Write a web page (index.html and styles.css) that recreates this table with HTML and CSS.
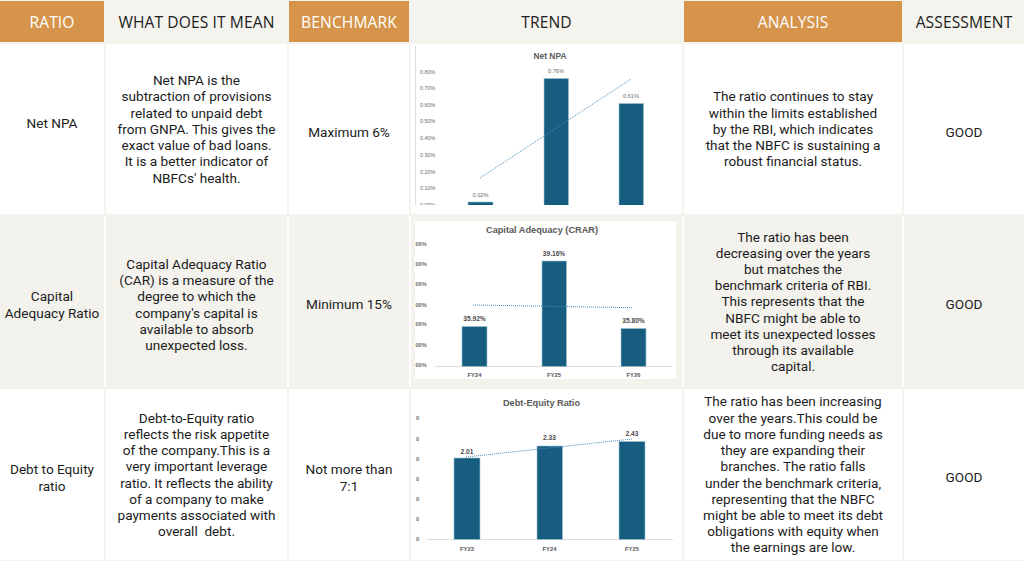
FILE: index.html
```html
<!DOCTYPE html>
<html lang="en">
<head>
<meta charset="utf-8">
<title>NBFC Ratio Analysis</title>
<link rel="stylesheet" href="styles.css">
</head>
<body>
<div class="table">
  <div class="row head">
    <div class="cell hc orange">RATIO</div>
    <div class="cell hc plain">WHAT DOES IT MEAN</div>
    <div class="cell hc orange">BENCHMARK</div>
    <div class="cell hc plain">TREND</div>
    <div class="cell hc orange">ANALYSIS</div>
    <div class="cell hc plain">ASSESSMENT</div>
  </div>

  <div class="row r1">
    <div class="cell"><p class="lift">Net NPA</p></div>
    <div class="cell"><p>Net NPA is the<br>subtraction of provisions<br>related to unpaid debt<br>from GNPA. This gives the<br>exact value of bad loans.<br>It is a better indicator of<br>NBFCs' health.</p></div>
    <div class="cell"><p class="drop">Maximum 6%</p></div>
    <div class="cell chart">
      <svg class="chart-svg" viewBox="411 43 271 170" width="271" height="170">
        <defs><clipPath id="c1"><rect x="411" y="43" width="271" height="161"/></clipPath></defs>
        <g clip-path="url(#c1)">
          <line x1="415.5" y1="45" x2="415.5" y2="204" class="axis"/>
          <text x="550" y="58" class="title t1">Net NPA</text>
          <g class="ylab">
            <text x="420" y="72.5">0.80%</text>
            <text x="420" y="89">0.70%</text>
            <text x="420" y="105.5">0.60%</text>
            <text x="420" y="122">0.50%</text>
            <text x="420" y="139">0.40%</text>
            <text x="420" y="156">0.30%</text>
            <text x="420" y="172.5">0.20%</text>
            <text x="420" y="189">0.10%</text>
            <text x="420" y="206">0.00%</text>
          </g>
          <rect x="468" y="201" width="25" height="4" class="bar"/>
          <rect x="544" y="77.5" width="24.5" height="127" class="bar"/>
          <rect x="619" y="102.5" width="24.5" height="102" class="bar"/>
          <g class="dlab">
            <text x="480.5" y="196">0.02%</text>
            <text x="556" y="72">0.76%</text>
            <text x="631" y="97">0.61%</text>
          </g>
          <line x1="480" y1="177" x2="631" y2="78" class="trend"/>
        </g>
      </svg>
    </div>
    <div class="cell"><p>The ratio continues to stay<br>within the limits established<br>by the RBI, which indicates<br>that the NBFC is sustaining a<br>robust financial status.</p></div>
    <div class="cell"><p class="drop">GOOD</p></div>
  </div>

  <div class="row r2">
    <div class="cell"><p class="drop">Capital<br>Adequacy Ratio</p></div>
    <div class="cell"><p class="drop">Capital Adequacy Ratio<br>(CAR) is a measure of the<br>degree to which the<br>company's capital is<br>available to absorb<br>unexpected loss.</p></div>
    <div class="cell"><p class="drop">Minimum 15%</p></div>
    <div class="cell chart">
      <svg class="chart-svg" viewBox="411 215 271 171" width="271" height="171">
        <rect x="415" y="220" width="261" height="158" fill="#ffffff"/>
        <text x="542" y="231.5" class="title">Capital Adequacy (CRAR)</text>
        <g class="ylab b">
          <text x="415.5" y="245">00%</text>
          <text x="415.5" y="265">00%</text>
          <text x="415.5" y="285">00%</text>
          <text x="415.5" y="306">00%</text>
          <text x="415.5" y="325">00%</text>
          <text x="415.5" y="346">00%</text>
          <text x="415.5" y="366">00%</text>
        </g>
        <line x1="435" y1="365.5" x2="673" y2="365.5" class="axis"/>
        <rect x="462" y="325.5" width="25" height="40" class="bar"/>
        <rect x="542" y="260" width="24.5" height="105.5" class="bar"/>
        <rect x="621" y="327.5" width="25" height="38" class="bar"/>
        <g class="dlab b">
          <text x="474.5" y="320">35.92%</text>
          <text x="554" y="255">39.16%</text>
          <text x="633.5" y="322">35.80%</text>
        </g>
        <g class="xlab">
          <text x="474.5" y="376">FY24</text>
          <text x="554" y="376">FY25</text>
          <text x="633.5" y="376">FY26</text>
        </g>
        <line x1="473" y1="304" x2="633" y2="306.7" class="trend"/>
      </svg>
    </div>
    <div class="cell"><p>The ratio has been<br>decreasing over the years<br>but matches the<br>benchmark criteria of RBI.<br>This represents that the<br>NBFC might be able to<br>meet its unexpected losses<br>through its available<br>capital.</p></div>
    <div class="cell"><p class="drop">GOOD</p></div>
  </div>

  <div class="row r3">
    <div class="cell"><p class="drop">Debt to Equity<br>ratio</p></div>
    <div class="cell"><p>Debt-to-Equity ratio<br>reflects the risk appetite<br>of the company.This is a<br>very important leverage<br>ratio. It reflects the ability<br>of a company to make<br>payments associated with<br>overall&nbsp; debt.</p></div>
    <div class="cell"><p class="drop">Not more than<br>7:1</p></div>
    <div class="cell chart">
      <svg class="chart-svg" viewBox="411 388 271 171" width="271" height="171">
        <text x="541.5" y="404.5" class="title">Debt-Equity Ratio</text>
        <g class="ylab b">
          <text x="416" y="419">0</text>
          <text x="416" y="439.7">0</text>
          <text x="416" y="459.7">0</text>
          <text x="416" y="480">0</text>
          <text x="416" y="499.7">0</text>
          <text x="416" y="520">0</text>
          <text x="416" y="540">0</text>
        </g>
        <line x1="427" y1="538.5" x2="673" y2="538.5" class="axis"/>
        <rect x="454" y="457" width="26" height="81.5" class="bar"/>
        <rect x="537" y="445" width="25.5" height="93.5" class="bar"/>
        <rect x="619" y="440.5" width="26" height="98" class="bar"/>
        <g class="dlab b">
          <text x="467" y="453">2.01</text>
          <text x="549.5" y="439">2.33</text>
          <text x="632" y="435">2.43</text>
        </g>
        <g class="xlab">
          <text x="467" y="550">FY23</text>
          <text x="549.5" y="550">FY24</text>
          <text x="632" y="550">FY25</text>
        </g>
        <line x1="466" y1="456" x2="632" y2="438" class="trend"/>
      </svg>
    </div>
    <div class="cell"><p>The ratio has been increasing<br>over the years.This could be<br>due to more funding needs as<br>they are expanding their<br>branches. The ratio falls<br>under the benchmark criteria,<br>representing that the NBFC<br>might be able to meet its debt<br>obligations with equity when<br>the earnings are low.</p></div>
    <div class="cell"><p class="drop">GOOD</p></div>
  </div>
</div>
</body>
</html>
```

FILE: styles.css
```css
html, body {
  margin: 0;
  padding: 0;
}

body {
  background: #f4f3ee;
  font-family: Roboto, "Liberation Sans", Arial, sans-serif;
  color: #1c1c1c;
  width: 1024px;
  height: 561px;
  overflow: hidden;
}

.table {
  display: grid;
  grid-template-rows: 41px 170px 171px 171px;
  row-gap: 2px;
  padding-top: 1px;
}

.row {
  display: grid;
  grid-template-columns: 104px 181px 120px 271px 218px 120px;
  column-gap: 2px;
}

.r2 {
  background: #ffffff;
}

.cell {
  display: flex;
  align-items: center;
  justify-content: center;
  text-align: center;
  overflow: hidden;
}

.cell p {
  margin: 0;
  font-size: 13.6px;
  line-height: 16.2px;
  white-space: nowrap;
}

.cell p.lift {
  margin-bottom: 12px;
}

.cell p.drop {
  margin-top: 6px;
}

.r1 .cell,
.r3 .cell {
  background: #ffffff;
}

.r2 .cell {
  background: #f3f2ed;
}

.hc {
  font-family: "Open Sans", "Liberation Sans", sans-serif;
  font-size: 15.6px;
  font-weight: 500;
  letter-spacing: 0.1px;
}

.orange {
  background: #d5944a;
  color: #ffffff;
}

.plain {
  background: #f4f3ee;
  color: #222222;
}

.chart {
  align-items: stretch;
  justify-content: stretch;
}

.chart-svg {
  display: block;
  font-family: "Liberation Sans", Arial, sans-serif;
}

.axis {
  stroke: #dedede;
  stroke-width: 1;
}

.bar {
  fill: #175d80;
  stroke: #9fc3d6;
  stroke-width: 0.6;
}

.trend {
  stroke: #4a8dbb;
  stroke-width: 1;
  stroke-dasharray: 1 1;
}

.title {
  font-size: 9.2px;
  font-weight: bold;
  fill: #5a5a5a;
  text-anchor: middle;
}

.title.t1 {
  font-size: 8.4px;
}

.ylab text {
  font-size: 5.4px;
  fill: #6b6b6b;
}

.ylab.b text {
  font-weight: bold;
  font-size: 5.6px;
}

.dlab text {
  font-size: 5.6px;
  fill: #6b6b6b;
  text-anchor: middle;
}

.dlab.b text {
  font-size: 6.6px;
  font-weight: bold;
  fill: #4a4a4a;
}

.xlab text {
  font-size: 5.8px;
  font-weight: bold;
  fill: #555555;
  text-anchor: middle;
}
```
